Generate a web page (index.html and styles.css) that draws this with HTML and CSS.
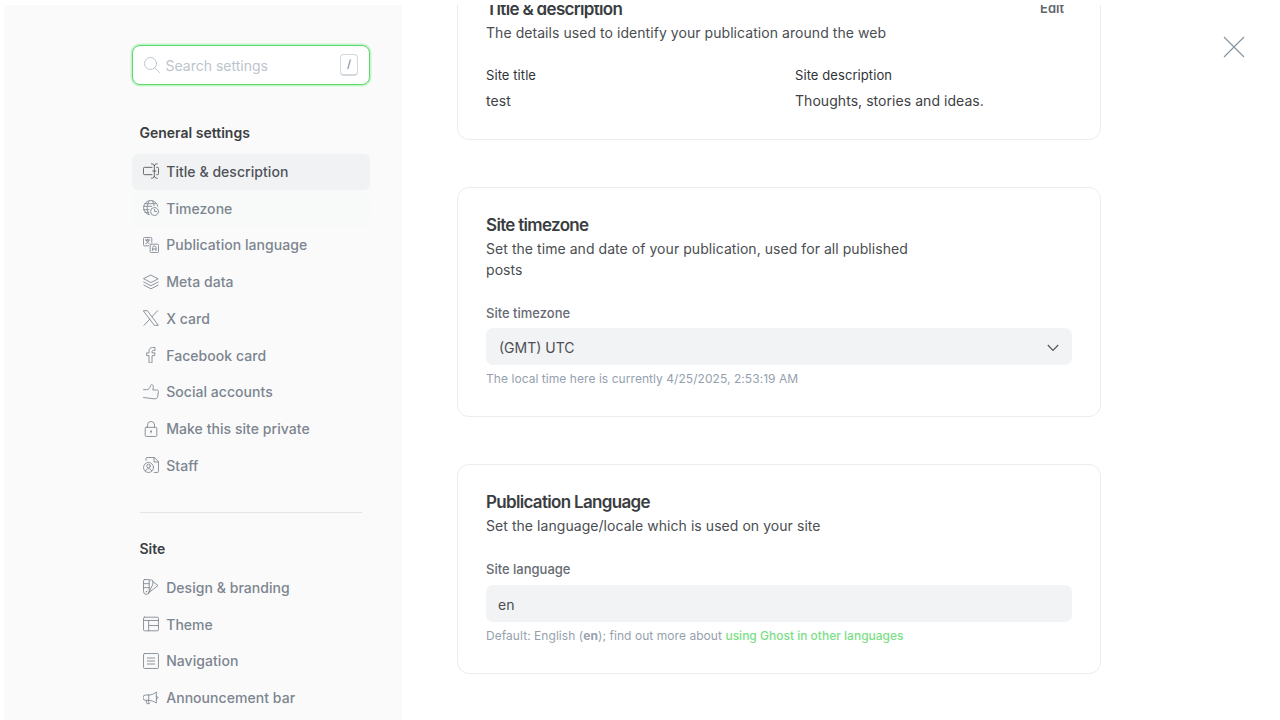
FILE: index.html
```html
<!DOCTYPE html>
<html lang="en">
<head>
<meta charset="utf-8">
<title>Settings</title>
<link rel="stylesheet" href="styles.css">
</head>
<body>
<div class="app">
  <aside class="sidebar">
    <label class="search">
      <svg class="icon search-icon" viewBox="0 0 24 24"><circle cx="9.8" cy="9.8" r="9"/><path d="M16.3 16.3 23.3 23.3"/></svg>
      <input class="search-input" type="text" placeholder="Search settings">
      <kbd class="search-key">/</kbd>
    </label>

    <h2 class="nav-heading">General settings</h2>
    <nav class="nav">
      <a class="nav-item active"><svg class="icon" viewBox="0 0 24 24"><path d="M13.500 17.500H2.200a1.500 1.500 0 0 1-1.500-1.500V8a1.500 1.500 0 0 1 1.500-1.500h11.300M20.500 6.500h1.300a1.500 1.500 0 0 1 1.500 1.500v8a1.500 1.500 0 0 1-1.500 1.500h-1.300M17 4v16M12.700 1.200c2.800 0 4.300 1.200 4.300 3.300 0-2.100 1.500-3.300 4.300-3.300M12.700 22.800c2.800 0 4.300-1.200 4.300-3.300 0 2.100 1.500 3.300 4.300 3.300M14.500 12h5"/></svg><span>Title &amp; description</span></a>
      <a class="nav-item hover"><svg class="icon" viewBox="0 0 24 24"><path d="M9.500 22.200A10.800 10.800 0 1 1 22.300 9.500M8.300 21.500C5.500 15.500 5.500 7.500 9.300 1M13.700 1c1.800 2.600 2.700 5 2.900 7.800M1 9.500h12M3 5.500h17M1 14.500h8M3 18.500h6"/><circle cx="17.300" cy="17.300" r="6"/><path d="M17.300 14v3.300h3"/></svg><span>Timezone</span></a>
      <a class="nav-item"><svg class="icon" viewBox="0 0 24 24"><path d="M8.500 13.200H2.200A1.500 1.500 0 0 1 .7 11.700V2.200A1.500 1.500 0 0 1 2.200.7h9.500a1.500 1.500 0 0 1 1.500 1.500v6M12.300 10.800h9.500a1.500 1.500 0 0 1 1.500 1.500v9.500a1.500 1.500 0 0 1-1.500 1.500h-9.500a1.500 1.500 0 0 1-1.500-1.500v-9.500a1.500 1.500 0 0 1 1.500-1.500M3.700 4.500h6.500M7 3v1.500M9 4.500c-.5 3-2.500 5-5 5.500M5 4.500c.5 2.500 2 4.500 4.500 5.500M14.500 20.500V16a2.500 2.500 0 0 1 5 0v4.500M14.500 18h5"/></svg><span>Publication language</span></a>
      <a class="nav-item"><svg class="icon" viewBox="0 0 24 24"><path d="m12 1.800 10.800 5.500L12 12.800 1.200 7.300zM22.800 12 12 17.500 1.200 12M22.800 16.600 12 22.200 1.200 16.600"/></svg><span>Meta data</span></a>
      <a class="nav-item"><svg class="icon" viewBox="0 0 24 24"><path d="M1 1h5.500L23 23h-5.500zM1.500 23l8.800-9.300M22 1l-8.500 9"/></svg><span>X card</span></a>
      <a class="nav-item"><svg class="icon" viewBox="0 0 24 24"><path d="M9 23.200V13H5.500V8.800H9V6.200C9 2.500 11 .8 14.500.8h3.500v4.400h-2.500c-1.600 0-2 .7-2 2v1.600H18l-.7 4.200h-3.800v10.200z"/></svg><span>Facebook card</span></a>
      <a class="nav-item"><svg class="icon" viewBox="0 0 24 24"><path d="M.8 8.500h4.500c2.800 0 5.200-2.200 5.700-4.800.3-2 .9-2.700 2.100-2.700 1.800 0 2.600 1.600 2.300 3.900L14.800 9h6c1.700 0 2.700 1.200 2.400 2.700l-1.300 7.800c-.3 1.800-1.600 2.700-3.600 2.700C11 22.200 7 20.500.8 20.300"/></svg><span>Social accounts</span></a>
      <a class="nav-item"><svg class="icon" viewBox="0 0 24 24"><rect x="3.300" y="9.500" width="17.400" height="13.700" rx="1.500"/><path d="M6.700 9.500V6a5.300 5.300 0 0 1 10.600 0v3.500M12 15.300v2.500"/><circle cx="12" cy="15.300" r=".5"/></svg><span>Make this site private</span></a>
      <a class="nav-item"><svg class="icon" viewBox="0 0 24 24"><path d="M4.500 5V2.300A1.500 1.500 0 0 1 6 .8h11.200L23.200 7v14.700a1.500 1.500 0 0 1-1.500 1.500h-5M16.500.8V7.500h6.700"/><circle cx="8.300" cy="15.700" r="7.500"/><circle cx="8.300" cy="13.500" r="2.700"/><path d="M3.800 21c.8-2.500 2.200-3.500 4.500-3.500s3.700 1 4.500 3.500"/></svg><span>Staff</span></a>
    </nav>

    <hr class="divider">

    <h2 class="nav-heading site">Site</h2>
    <nav class="nav">
      <a class="nav-item"><svg class="icon" viewBox="0 0 24 24"><path d="M2.300.8h5.500a1.500 1.500 0 0 1 1.500 1.500v16.500a4.200 4.200 0 0 1-8.500 0V2.300A1.500 1.500 0 0 1 2.300.8zM.8 7h8.500M.8 13h8.500M9.300 1.500h3.500a2 2 0 0 1 2 2v4.300L9 20M14.800 4l7.700 5.800L8 21"/><circle cx="5" cy="19" r=".4"/></svg><span>Design &amp; branding</span></a>
      <a class="nav-item"><svg class="icon" viewBox="0 0 24 24"><rect x=".8" y="1.800" width="22.400" height="20.400" rx="1.500"/><path d="M.8 6.700h22.400M8.500 6.700v15.500M8.500 14.300h14.700"/></svg><span>Theme</span></a>
      <a class="nav-item"><svg class="icon" viewBox="0 0 24 24"><rect x=".8" y=".8" width="22.400" height="22.400" rx="1.500"/><path d="M6.500 7.500h11M6.500 12h11M6.500 16.500h11"/></svg><span>Navigation</span></a>
      <a class="nav-item"><svg class="icon" viewBox="0 0 24 24"><path d="M8 7.500H4a3.500 3.500 0 0 0 0 8h4zM8 7.500c4.500 0 8.500-1.500 12-4.500v16.500c-3.500-2.500-7.500-4-12-4M20 9.500c3.700 0 3.700 4 0 4M4.500 15.500l1.500 5h3.500L8 15.500"/></svg><span>Announcement bar</span></a>
    </nav>
  </aside>

  <main class="main">
    <section class="card card-first">
      <header class="card-head"><h3 class="card-title">Title &amp; description</h3><button class="edit">Edit</button></header>
      <p class="card-text">The details used to identify your publication around the web</p>
      <div class="values">
        <div class="value"><h6 class="value-label">Site title</h6><p class="value-text">test</p></div>
        <div class="value"><h6 class="value-label">Site description</h6><p class="value-text">Thoughts, stories and ideas.</p></div>
      </div>
    </section>

    <section class="card card-timezone">
      <h3 class="card-title">Site timezone</h3>
      <p class="card-text">Set the time and date of your publication, used for all published posts</p>
      <div class="label">Site timezone</div>
      <div class="field select"><span>(GMT) UTC</span><svg class="chevron" viewBox="0 0 12 8"><path d="m.8 1 5.200 5.400L11.200 1"/></svg></div>
      <p class="hint">The local time here is currently 4/25/2025, 2:53:19 AM</p>
    </section>

    <section class="card card-language">
      <h3 class="card-title">Publication Language</h3>
      <p class="card-text">Set the language/locale which is used on your site</p>
      <div class="label">Site language</div>
      <div class="field">en</div>
      <p class="hint">Default: English (<strong>en</strong>); find out more about <a class="link">using Ghost in other languages</a></p>
    </section>
  </main>
  <div class="close"><svg class="close-icon" viewBox="0 0 22 22"><path d="m1 1 20 20M21 1 1 21"/></svg></div>
</div>
</body>
</html>
```
FILE: styles.css
```css
* { box-sizing: border-box; }
body {
  margin: 0;
  padding: 5px 0 0 4px;
  height: 720px;
  overflow: hidden;
  background: #fff;
  color: #394047;
  font-family: Inter, "Liberation Sans", sans-serif;
  font-size: 14px;
}
h2, h3, h6, p { margin: 0; }
.app { display: flex; height: 715px; overflow: hidden; }
.sidebar { flex: none; width: 398px; padding: 40px 32px 0 128px; background: #fafafa; }
.icon { flex: none; width: 16px; height: 16px; fill: none; stroke: currentColor; stroke-width: 1.3; stroke-linejoin: round; stroke-linecap: round; }

.search {
  display: flex;
  align-items: center;
  height: 39.500px;
  padding: 0 11px 0 10.500px;
  border: 1px solid #5bd96b;
  border-radius: 8px;
  background: #fff;
  box-shadow: 0 0 0 1.500px #c5f3cb;
}
.search-icon { color: #b5bdc6; }
.search-input { flex: 1; min-width: 0; margin-left: 6px; padding: 2px 0 0; border: 0; outline: 0; background: none; font: inherit; }
.search-input::placeholder { color: #bcc4cd; opacity: 1; }
.search-key {
  width: 18px;
  height: 22px;
  border: 1px solid #d3d8de;
  border-bottom-width: 2px;
  border-radius: 4px;
  color: #7c8b9a;
  font: 500 11px/18px Inter, sans-serif;
  text-align: center;
}

.nav-heading { margin: 37.400px 0 10.100px 7.500px; color: #3b3e42; font-size: 14px; line-height: 22px; font-weight: 600; }
.nav { display: grid; grid-auto-rows: 36px; row-gap: .75px; }
.nav-item { display: flex; align-items: center; gap: 7.200px; padding: 0 0 1px 11px; border-radius: 6px; color: #7c8590; font-weight: 500; letter-spacing: .05px; }
.nav-item.active { background: #f1f2f4; color: #4f5358; }
.nav-item.hover { background: #f8faf9; }
.divider { height: 1px; margin: 28px 8px 0; border: 0; background: #e1e4e8; }
.nav-heading.site { margin-top: 25px; margin-bottom: 10px; }

.main { display: flex; flex-direction: column; flex: none; width: 699px; padding-left: 55px; }
.card { flex: none; padding: 25px 28px 0; border: 1px solid #ebecef; border-radius: 12px; background: #fff; }
.card-first { height: 169px; margin-top: -34px; }
.card-timezone { height: 230px; margin-top: 47px; }
.card-language { height: 210px; margin-top: 47px; }
.card-head { display: flex; justify-content: space-between; align-items: flex-start; }
.card-title { margin-bottom: 1px; color: #3a3d41; font-size: 17px; line-height: 24px; font-weight: 600; letter-spacing: -.68px; }
.card-text { max-width: 440px; color: #4a4d51; font-size: 14px; line-height: 21px; letter-spacing: .055px; }
.edit { margin-right: 8px; padding: 0; border: 0; background: none; color: #62676d; font: 600 13px/22px Inter, sans-serif; }
.values { display: grid; grid-template-columns: 1fr 1fr; column-gap: 32px; margin-top: 22px; }
.value-label { color: #303338; font-size: 13px; line-height: 20px; font-weight: 400; letter-spacing: .08px; }
.value-text { margin-top: 5px; color: #3e4145; font-size: 14px; line-height: 21px; letter-spacing: .05px; }
.label { margin-top: 23px; color: #666b72; font-size: 13px; line-height: 20px; font-weight: 500; }
.field { display: flex; align-items: center; height: 37px; margin-top: 5.400px; padding: 1px 12px 0; border-radius: 7px; background: #f2f3f5; color: #4b4e52; font-size: 14px; }
.card-language .field { margin-top: 6.400px; }
.select { justify-content: space-between; padding-top: 2px; padding-left: 13px; }
.chevron { width: 12px; height: 8px; margin-right: 1px; fill: none; stroke: #555; stroke-width: 1.2; }
.hint { margin-top: 3.600px; color: #95a1ae; font-size: 12px; line-height: 20px; letter-spacing: .055px; }
.link { color: #7ce087; font-weight: 500; letter-spacing: 0; }
.close { padding: 31px 0 0 122px; }
.close-icon { display: block; width: 22px; height: 22px; fill: none; stroke: #8492a1; stroke-width: 1.1; }
```
